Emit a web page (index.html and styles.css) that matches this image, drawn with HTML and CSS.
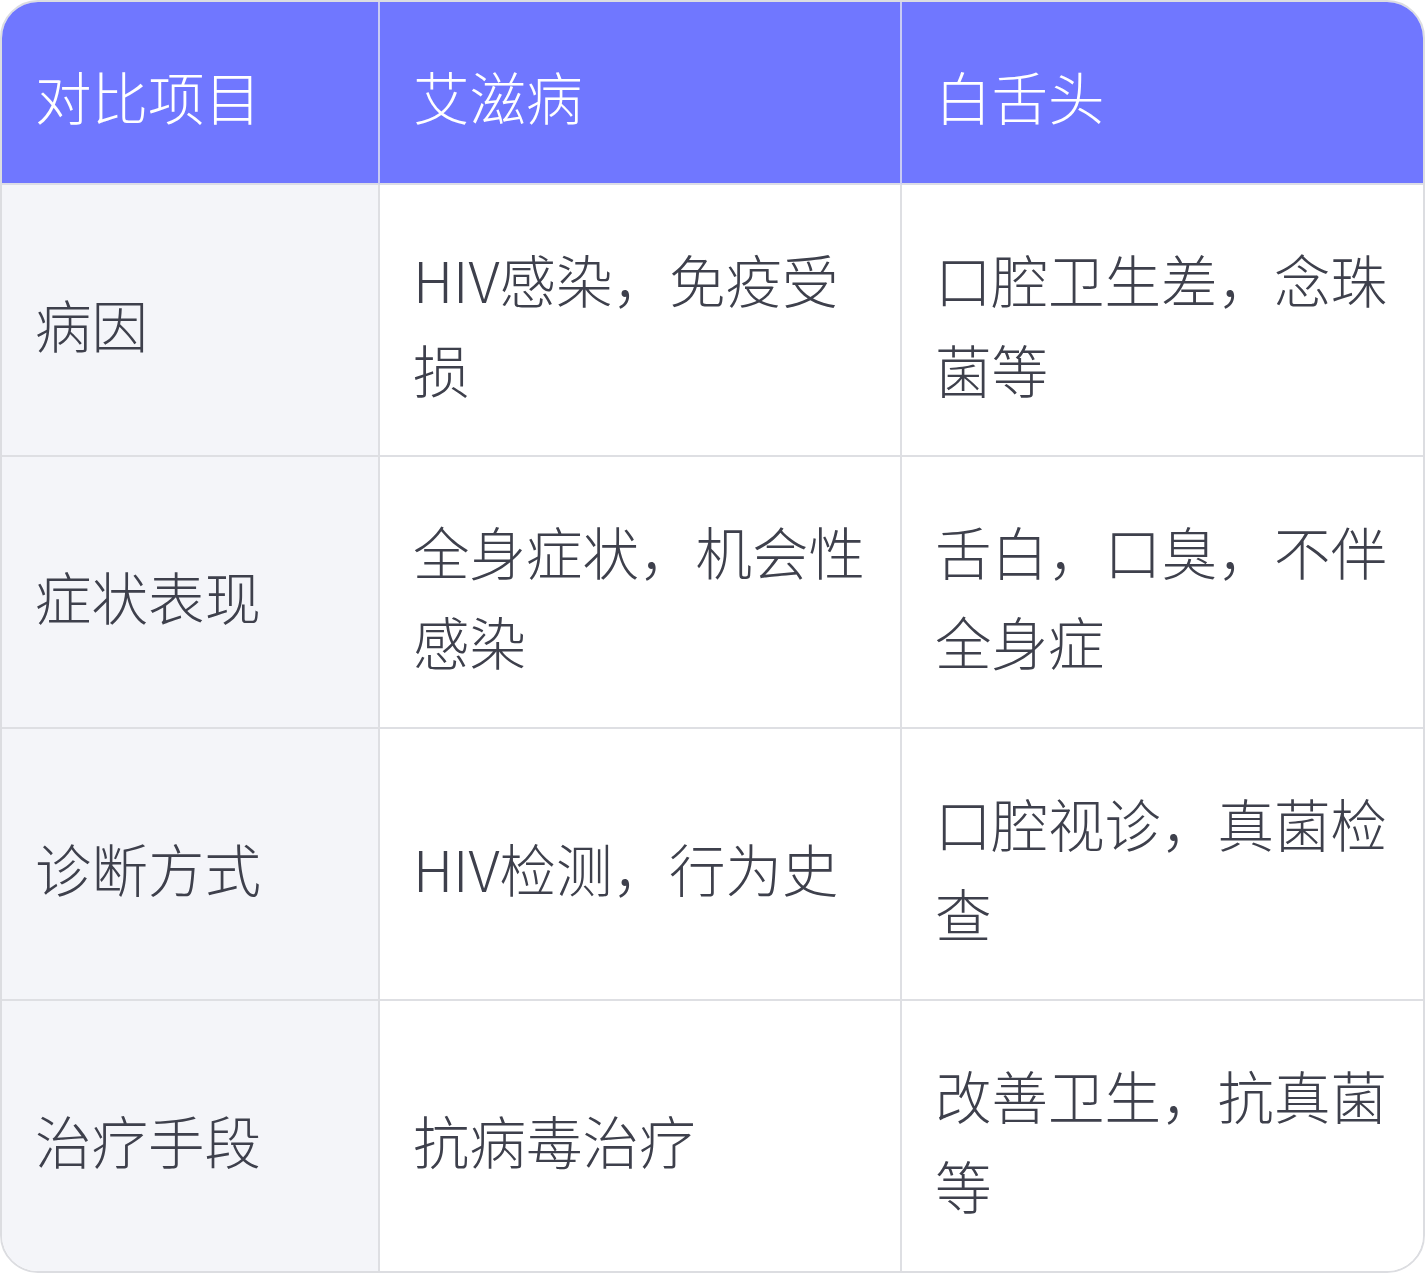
FILE: index.html
```html
<!DOCTYPE html>
<html lang="zh-CN">
<head>
<meta charset="utf-8">
<title>艾滋病与白舌头对比</title>
<link rel="stylesheet" href="styles.css">
</head>
<body>
<div class="card">
  <table class="compare">
    <colgroup>
      <col class="c1">
      <col class="c2">
      <col class="c3">
    </colgroup>
    <thead>
      <tr>
        <th>对比项目</th>
        <th>艾滋病</th>
        <th>白舌头</th>
      </tr>
    </thead>
    <tbody>
      <tr>
        <td class="label">病因</td>
        <td>HIV感染，免疫受损</td>
        <td>口腔卫生差，念珠菌等</td>
      </tr>
      <tr>
        <td class="label">症状表现</td>
        <td>全身症状，机会性感染</td>
        <td>舌白，口臭，不伴全身症</td>
      </tr>
      <tr>
        <td class="label">诊断方式</td>
        <td>HIV检测，行为史</td>
        <td>口腔视诊，真菌检查</td>
      </tr>
      <tr>
        <td class="label">治疗手段</td>
        <td>抗病毒治疗</td>
        <td>改善卫生，抗真菌等</td>
      </tr>
    </tbody>
  </table>
</div>
</body>
</html>
```
FILE: styles.css
```css
html, body {
  margin: 0;
  padding: 0;
  background: #ffffff;
}

.card {
  width: 1425px;
  box-sizing: border-box;
  border: 2px solid #dcdde1;
  border-radius: 38px;
  overflow: hidden;
  background: #ffffff;
}

.compare {
  width: 100%;
  table-layout: fixed;
  border-collapse: separate;
  border-spacing: 0;
  font-family: "Noto Sans CJK SC", "Noto Sans", sans-serif;
  font-weight: 300;
  font-size: 56.5px;
  line-height: 90px;
  color: #3e404c;
}

.c1 { width: 378px; }
.c2 { width: 522px; }
.c3 { width: 521px; }

.compare th,
.compare td {
  text-align: left;
  vertical-align: middle;
  padding: 48px 28px 42px 33px;
  border-right: 2px solid #dedfe3;
  border-bottom: 2px solid #dedfe3;
  word-break: break-all;
}

.compare th:last-child,
.compare td:last-child {
  border-right: none;
}

.compare tbody tr:last-child td {
  border-bottom: none;
}

.compare th {
  background: #7077ff;
  color: #ffffff;
  font-weight: 300;
  padding-top: 48px;
  padding-bottom: 43px;
  border-right-color: #c9cbf4;
  border-bottom-color: #dcdde6;
}

.compare td {
  height: 180px;
  background: #ffffff;
}

.compare td.label {
  background: #f4f5f9;
}
```
